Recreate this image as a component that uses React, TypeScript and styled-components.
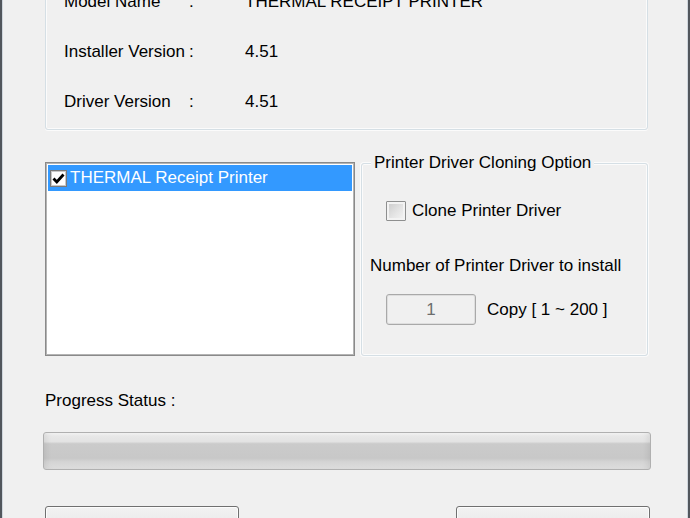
import React from "react";
import styled, { createGlobalStyle } from "styled-components";

const Global = createGlobalStyle`
  html, body { margin: 0; padding: 0; background: #f0f0f0; }
  #root { width: 690px; height: 518px; }
`;

const Window = styled.div`
  width: 690px;
  height: 518px;
  box-sizing: border-box;
  overflow: hidden;
  background: #f0f0f0;
  border-left: 2px solid #51565c;
  border-right: 2px solid #51565c;
  box-shadow: inset 1px 0 0 #cfd6dd, inset -1px 0 0 #cfd6dd;
  padding: 0 40px 0 43px;
  display: flex;
  flex-direction: column;
  font-family: "Liberation Sans", Arial, sans-serif;
  font-size: 17px;
  line-height: 20px;
  color: #000;

  & > * {
    flex-shrink: 0;
  }
`;

const InfoGroup = styled.div`
  margin-top: -30px;
  border: 1px solid #d5dfe5;
  border-radius: 3px;
  box-shadow: inset 0 0 0 1px #fbfbfb, 0 1px 0 #fbfbfb;
  padding: 21px 0 17px 18px;
  display: grid;
  grid-template-columns: 125px 56px 1fr;
  row-gap: 30px;
`;

const Cell = styled.span`
  white-space: nowrap;
`;

const MiddleRow = styled.div`
  margin-top: 32px;
  height: 194px;
  display: flex;
  gap: 6px;
`;

const ListBox = styled.div`
  width: 310px;
  box-sizing: border-box;
  background: #fff;
  border: 1px solid #8a8a8a;
  box-shadow: inset 0 0 0 1px #b4b4b4;
  padding: 2px;
`;

const ListItem = styled.div<{ $selected?: boolean }>`
  height: 26px;
  display: flex;
  align-items: center;
  gap: 3px;
  padding-left: 2px;
  background: ${(p) => (p.$selected ? "#3399ff" : "transparent")};
  color: ${(p) => (p.$selected ? "#fff" : "#000")};
  white-space: nowrap;
`;

const ItemCheck = styled.span`
  width: 17px;
  height: 17px;
  box-sizing: border-box;
  background: #fff;
  border: 1px solid #7a7a7a;
  box-shadow: inset 0 0 0 1px #c8c8c8;
  display: flex;
  align-items: center;
  justify-content: center;
`;

const OptionGroup = styled.div`
  flex: 1;
  margin-top: 1px;
  position: relative;
  border: 1px solid #d5dfe5;
  border-radius: 3px;
  box-shadow: inset 0 0 0 1px #fbfbfb, 0 0 0 1px #fbfbfb;
  padding: 36px 0 0 8px;
  display: flex;
  flex-direction: column;
  align-items: flex-start;
`;

const Caption = styled.span`
  position: absolute;
  top: -11px;
  left: 9px;
  padding: 0 3px;
  background: #f0f0f0;
  white-space: nowrap;
`;

const CheckRow = styled.label`
  margin-left: 16px;
  height: 21px;
  display: flex;
  align-items: center;
  gap: 6px;
  white-space: nowrap;
`;

const CheckBox = styled.span`
  width: 20px;
  height: 20px;
  box-sizing: border-box;
  border: 1px solid #8e8f8f;
  border-radius: 1px;
  box-shadow: inset 0 0 0 2px #f3f3f3;
  background: linear-gradient(135deg, #c9c9c9 0%, #e4e4e4 55%, #f6f6f6 100%);
`;

const FieldLabel = styled.div`
  margin-top: 35px;
  white-space: nowrap;
`;

const InputRow = styled.div`
  margin-top: 18px;
  margin-left: 16px;
  display: flex;
  align-items: center;
  gap: 11px;
  white-space: nowrap;
`;

const NumberBox = styled.div`
  width: 90px;
  height: 31px;
  box-sizing: border-box;
  border: 1px solid #a9a9a9;
  border-radius: 3px;
  box-shadow: inset 0 0 0 1px #dedede;
  background: #f0f0f0;
  color: #6d6d6d;
  display: flex;
  align-items: center;
  justify-content: center;
`;

const StatusLabel = styled.div`
  margin-top: 35px;
  white-space: nowrap;
`;

const ProgressBar = styled.div`
  margin: 21px -3px 0 -2px;
  height: 38px;
  box-sizing: border-box;
  border: 1px solid #b0b0b0;
  border-radius: 3px;
  background: linear-gradient(
    to bottom,
    #f4f4f4 0%,
    #e8e8e8 8%,
    #e3e3e3 24%,
    #cbcbcb 30%,
    #c8c8c8 70%,
    #d4d4d4 80%,
    #dddddd 100%
  );
  box-shadow: inset 6px 0 6px -4px rgba(0, 0, 0, 0.08),
    inset -6px 0 6px -4px rgba(0, 0, 0, 0.08);
`;

const ButtonRow = styled.div`
  margin-top: 36px;
  margin-right: -2px;
  display: flex;
  justify-content: space-between;
`;

const Button = styled.button`
  width: 194px;
  height: 34px;
  box-sizing: border-box;
  border: 1px solid #707070;
  border-radius: 3px;
  box-shadow: inset 0 0 0 1px #fcfcfc;
  background: linear-gradient(to bottom, #f2f2f2 0%, #ebebeb 50%, #dddddd 51%, #cfcfcf 100%);
  font: inherit;
  padding: 0;
`;

const infoRows: [string, string][] = [
  ["Model Name", "THERMAL RECEIPT PRINTER"],
  ["Installer Version", "4.51"],
  ["Driver Version", "4.51"],
];

export default function App() {
  return (
    <>
      <Global />
      <Window>
        <InfoGroup>
          {infoRows.map(([label, value]) => (
            <React.Fragment key={label}>
              <Cell>{label}</Cell>
              <Cell>:</Cell>
              <Cell>{value}</Cell>
            </React.Fragment>
          ))}
        </InfoGroup>

        <MiddleRow>
          <ListBox>
            <ListItem $selected>
              <ItemCheck>
                <svg width="13" height="13" viewBox="0 0 13 13">
                  <path
                    d="M1.5 6.5 L4.8 10 L11.5 2.5"
                    fill="none"
                    stroke="#000"
                    strokeWidth="2.8"
                  />
                </svg>
              </ItemCheck>
              THERMAL Receipt Printer
            </ListItem>
          </ListBox>

          <OptionGroup>
            <Caption>Printer Driver Cloning Option</Caption>
            <CheckRow>
              <CheckBox />
              Clone Printer Driver
            </CheckRow>
            <FieldLabel>Number of Printer Driver to install</FieldLabel>
            <InputRow>
              <NumberBox>1</NumberBox>
              Copy [ 1 ~ 200 ]
            </InputRow>
          </OptionGroup>
        </MiddleRow>

        <StatusLabel>Progress Status :</StatusLabel>
        <ProgressBar />

        <ButtonRow>
          <Button />
          <Button />
        </ButtonRow>
      </Window>
    </>
  );
}
